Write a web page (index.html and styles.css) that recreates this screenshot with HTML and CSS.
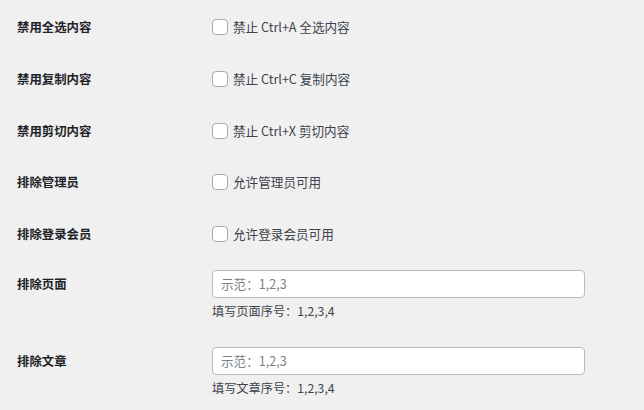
FILE: index.html
```
<!DOCTYPE html>
<html>
<head>
	<meta charset="utf-8">
	<link rel="stylesheet" href="styles.css">
</head>
<body>
	<div class="form">
		<div class="row check-row">
			<div class="label">禁用全选内容</div>
			<label class="field"><input type="checkbox" class="box"><span>禁止 Ctrl+A 全选内容</span></label>
		</div>
		<div class="row check-row">
			<div class="label">禁用复制内容</div>
			<label class="field"><input type="checkbox" class="box"><span>禁止 Ctrl+C 复制内容</span></label>
		</div>
		<div class="row check-row">
			<div class="label">禁用剪切内容</div>
			<label class="field"><input type="checkbox" class="box"><span>禁止 Ctrl+X 剪切内容</span></label>
		</div>
		<div class="row check-row">
			<div class="label">排除管理员</div>
			<label class="field"><input type="checkbox" class="box"><span>允许管理员可用</span></label>
		</div>
		<div class="row check-row">
			<div class="label">排除登录会员</div>
			<label class="field"><input type="checkbox" class="box"><span>允许登录会员可用</span></label>
		</div>
		<div class="row text-row">
			<div class="label">排除页面</div>
			<div class="field-col">
				<input type="text" class="text" placeholder="示范：1,2,3">
				<p class="desc">填写页面序号：1,2,3,4</p>
			</div>
		</div>
		<div class="row text-row">
			<div class="label">排除文章</div>
			<div class="field-col">
				<input type="text" class="text" placeholder="示范：1,2,3">
				<p class="desc">填写文章序号：1,2,3,4</p>
			</div>
		</div>
	</div>
</body>
</html>
```
FILE: styles.css
```
html, body {
	margin: 0;
	padding: 0;
	background-color: #f0f0f1;
	color: #3c434a;
	font-family: "Noto Sans CJK SC", sans-serif;
	font-size: 12.6px;
}
.form {
	padding-left: 17px;
}
.row {
	display: grid;
	grid-template-columns: 195px 1fr;
	align-items: start;
}
.check-row {
	height: 51.75px;
	box-sizing: border-box;
	padding-top: 19px;
	line-height: 16px;
}
.text-row {
	padding: 11px 0 16px 0;
}
.label {
	color: #1d2327;
	font-weight: bold;
	font-size: 12.4px;
}
.text-row .label {
	line-height: 28px;
}
.field {
	display: flex;
	align-items: center;
	gap: 5px;
}
.box {
	appearance: none;
	margin: 0;
	width: 16px;
	height: 16px;
	border: 1px solid #a7aaad;
	border-radius: 4px;
	background: #fff;
	box-sizing: border-box;
}
.field-col {
	display: flex;
	flex-direction: column;
}
.text {
	width: 373px;
	height: 28px;
	box-sizing: border-box;
	margin: 0;
	padding: 0 8px;
	border: 1px solid #b8babd;
	border-radius: 4px;
	background: #fff;
	font: inherit;
	color: #2c3338;
}
.text::placeholder {
	color: #7a7f85;
}
.desc {
	margin: 4px 0 0 0;
	line-height: 18px;
	color: #3c434a;
	font-size: 12.2px;
}
```
